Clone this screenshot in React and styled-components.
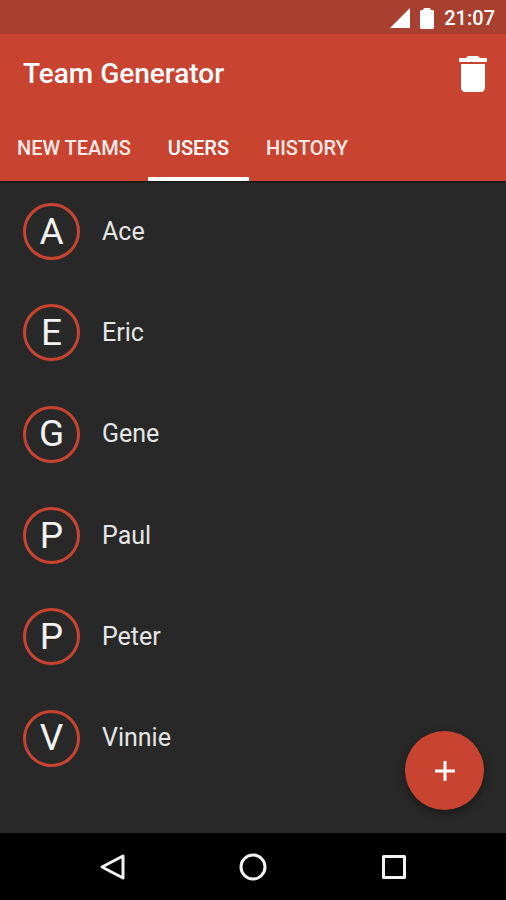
import React from "react";
import { useState } from "react";
import styled, { createGlobalStyle } from "styled-components";

const tabs = ["New Teams", "Users", "History"];
const users = ["Ace", "Eric", "Gene", "Paul", "Peter", "Vinnie"];

const App = () => {
  const [active, setActive] = useState("Users");

  return (
    <Container>
      <GlobalStyle />
      <StatusBar>
        <svg width="20" height="20" viewBox="0 0 20 20" aria-hidden="true">
          <path d="M20 0v20H0z" fill="#fff" />
        </svg>
        <svg width="14" height="21" viewBox="0 0 14 21" aria-hidden="true">
          <path
            d="M4 0h6l1 2h1.500q1.500 0 1.500 1.500v16q0 1.500-1.500 1.500h-11Q0 21 0 19.500v-16Q0 2 1.500 2H3z"
            fill="#fff"
          />
        </svg>
        <Clock>21:07</Clock>
      </StatusBar>
      <Header>
        <Toolbar>
          <Title>Team Generator</Title>
          <IconButton type="button" aria-label="Delete">
            <svg width="48" height="48" viewBox="0 0 24 24" fill="#fff">
              <path d="M6 19c0 1.1.9 2 2 2h8c1.1 0 2-.9 2-2V7H6v12zM19 4h-3.5l-1-1h-5l-1 1H5v2h14V4z" />
            </svg>
          </IconButton>
        </Toolbar>
        <Tabs role="tablist">
          {tabs.map((t) => (
            <Tab
              key={t}
              type="button"
              role="tab"
              aria-selected={t === active}
              $active={t === active}
              onClick={() => setActive(t)}
            >
              {t}
            </Tab>
          ))}
        </Tabs>
      </Header>
      <Content>
        <List>
          {users.map((u) => (
            <Row key={u}>
              <Avatar aria-hidden="true">{u[0]}</Avatar>
              <Name>{u}</Name>
            </Row>
          ))}
        </List>
        <AddButton type="button" aria-label="Add user">
          <svg width="22" height="22" viewBox="0 0 22 22">
            <path d="M11 1v20M1 11h20" stroke="#fff" strokeWidth="3" />
          </svg>
        </AddButton>
      </Content>
      <NavBar>
        <NavButton type="button" aria-label="Back">
          <NavIcon viewBox="0 0 28 28">
            <path d="M25 3v22L4 14z" />
          </NavIcon>
        </NavButton>
        <NavButton type="button" aria-label="Home">
          <NavIcon viewBox="0 0 28 28">
            <circle cx="14" cy="14" r="12" />
          </NavIcon>
        </NavButton>
        <NavButton type="button" aria-label="Recent apps">
          <NavIcon viewBox="0 0 28 28">
            <rect x="3.5" y="3.5" width="21" height="21" />
          </NavIcon>
        </NavButton>
      </NavBar>
    </Container>
  );
};

export default App;

const GlobalStyle = createGlobalStyle`
  * {
    box-sizing: border-box;
  }
  body {
    margin: 0;
    background: #282828;
    font-family: Roboto, "Liberation Sans", sans-serif;
  }
  button {
    border: 0;
    padding: 0;
    background: transparent;
    color: inherit;
    font-family: inherit;
    cursor: pointer;
  }
`;
const Container = styled.div`
  min-height: 100vh;
  display: flex;
  flex-direction: column;
  color: #fff;
`;
const StatusBar = styled.div`
  height: 34px;
  padding: 2px 11px 0;
  display: flex;
  align-items: center;
  justify-content: flex-end;
  gap: 10px;
  background: #a93f2f;
`;
const Clock = styled.span`
  font-size: 20px;
  font-weight: 500;
  line-height: 24px;
`;
const Header = styled.header`
  background: #c84431;
  box-shadow: 0 1px 2px rgba(0, 0, 0, 0.5);
`;
const Toolbar = styled.div`
  height: 80px;
  padding: 0 9px 0 23px;
  display: flex;
  align-items: center;
  justify-content: space-between;
`;
const Title = styled.h1`
  margin: 0;
  font-size: 28px;
  font-weight: 500;
  line-height: 32px;
`;
const IconButton = styled.button`
  display: flex;
`;
const Tabs = styled.div`
  display: flex;
`;
const Tab = styled.button`
  height: 67px;
  min-width: 101px;
  padding: 0 17px;
  font-size: 20px;
  font-weight: 500;
  text-transform: uppercase;
  color: ${(props) => (props.$active ? "#fff" : "#fbeae7")};
  box-shadow: ${(props) => (props.$active ? "inset 0 -4px #fff" : "none")};
`;
const Content = styled.main`
  flex: 1;
  display: flex;
  flex-direction: column;
  position: relative;
`;
const List = styled.ul`
  flex: 1;
  margin: 0;
  padding: 0 0 44px;
  list-style: none;
  display: flex;
  flex-direction: column;
`;
const Row = styled.li`
  flex: 1;
  min-height: 80px;
  max-height: 102px;
  padding: 0 23px;
  display: flex;
  align-items: center;
  gap: 22px;
`;
const Avatar = styled.div`
  width: 57px;
  height: 57px;
  border: 3px solid #c84431;
  border-radius: 50%;
  display: flex;
  align-items: center;
  justify-content: center;
  font-size: 37px;
  line-height: 48px;
  color: #f2f2f2;
`;
const Name = styled.span`
  font-size: 25px;
  line-height: 32px;
  color: #e6e6e6;
`;
const AddButton = styled.button`
  position: absolute;
  right: 22px;
  bottom: 23px;
  width: 79px;
  height: 79px;
  border-radius: 50%;
  display: flex;
  align-items: center;
  justify-content: center;
  && {
    background: #c84431;
  }
  box-shadow: 0 3px 8px rgba(0, 0, 0, 0.4);
`;
const NavBar = styled.nav`
  height: 67px;
  padding: 0 42px;
  display: flex;
  background: #000;
`;
const NavButton = styled.button`
  flex: 1;
  display: flex;
  align-items: center;
  justify-content: center;
`;
const NavIcon = styled.svg`
  width: 28px;
  height: 28px;
  fill: none;
  stroke: #f2f2f2;
  stroke-width: 3;
  stroke-linejoin: round;
`;
